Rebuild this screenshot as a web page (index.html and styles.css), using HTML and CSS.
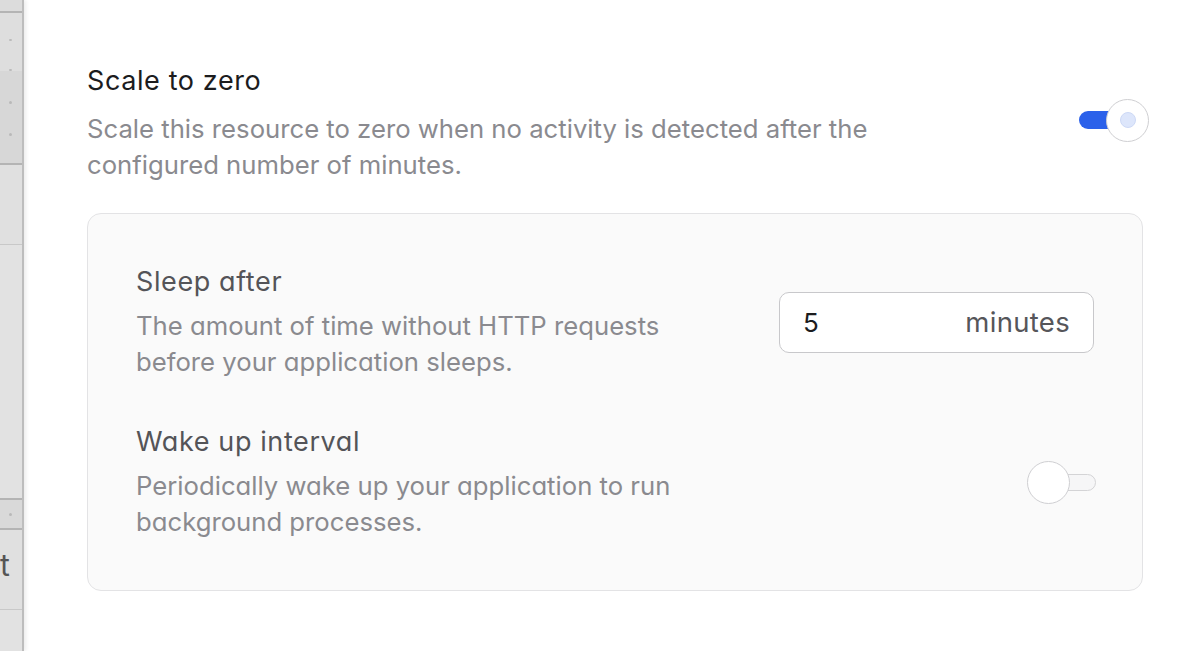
FILE: index.html
```html
<!DOCTYPE html>
<html lang="en">
<head>
<meta charset="utf-8">
<title>Scale to zero</title>
<link rel="stylesheet" href="styles.css">
</head>
<body>
<div class="layout">
  <aside class="backdrop">
    <div class="bd-block bd-top"></div>
    <div class="bd-block bd-rows">
      <span class="dot"></span>
      <span class="dot"></span>
    </div>
    <div class="bd-block bd-dark">
      <span class="dot"></span>
      <span class="dot"></span>
    </div>
    <div class="bd-block bd-mid"></div>
    <div class="bd-block bd-long"></div>
    <div class="bd-block bd-band"><span class="dot"></span></div>
    <div class="bd-block bd-text"><span class="bd-letter">t</span></div>
    <div class="bd-block bd-end"></div>
  </aside>

  <main class="panel">
    <section class="setting-head">
      <div class="setting-text">
        <h2 class="setting-title">Scale to zero</h2>
        <p class="setting-desc head-desc">Scale this resource to zero when no activity is detected after the configured number of minutes.</p>
      </div>
      <div class="toggle toggle-on" role="switch" aria-checked="true">
        <span class="thumb"><span class="thumb-dot"></span></span>
      </div>
    </section>

    <section class="card">
      <div class="row">
        <div class="row-text">
          <h3 class="row-title">Sleep after</h3>
          <p class="row-desc">The amount of time without HTTP requests before your application sleeps.</p>
        </div>
        <label class="number-input">
          <span class="number-value">5</span>
          <span class="number-unit">minutes</span>
        </label>
      </div>
      <div class="row">
        <div class="row-text">
          <h3 class="row-title">Wake up interval</h3>
          <p class="row-desc">Periodically wake up your application to run background processes.</p>
        </div>
        <div class="toggle toggle-off" role="switch" aria-checked="false">
          <span class="thumb"></span>
        </div>
      </div>
    </section>
  </main>
</div>
</body>
</html>
```
FILE: styles.css
```css
* { box-sizing: border-box; }

html, body {
  margin: 0;
  padding: 0;
  height: 100%;
  background: #ffffff;
  font-family: "Inter", "Noto Sans", "Liberation Sans", sans-serif;
}

.layout {
  display: flex;
  height: 651px;
  overflow: hidden;
}

/* background page peeking from the left */
.backdrop {
  width: 24px;
  flex: 0 0 24px;
  display: flex;
  flex-direction: column;
  background: #dedede;
  border-right: 2px solid #bdbdbd;
  box-shadow: 2px 0 4px rgba(0,0,0,0.08);
}

.bd-block {
  border-bottom: 2px solid #b4b4b4;
  display: flex;
  flex-direction: column;
  align-items: flex-start;
  padding-left: 9px;
}

.bd-top { height: 13px; background: #dcdcdc; }
.bd-rows { height: 58px; background: #dedede; border-bottom: none; padding-top: 26px; gap: 28px; }
.bd-dark { height: 94px; background: #d7d7d7; gap: 29px; padding-top: 30px; }
.bd-mid { height: 80px; background: #e0e0e0; border-bottom-color: #c8c8c8; border-bottom-width: 1px; }
.bd-long { height: 255px; background: #e2e2e2; }
.bd-band { height: 30px; background: #d9d9d9; justify-content: center; }
.bd-text { height: 80px; background: #e0e0e0; border-bottom-color: #c8c8c8; border-bottom-width: 1px; padding-left: 0; }
.bd-end { flex: 1; background: #e2e2e2; border-bottom: none; }

.dot {
  width: 3px;
  height: 3px;
  border-radius: 50%;
  background: #b9b9b9;
}

.bd-letter {
  font-size: 30px;
  line-height: 1;
  color: #555;
  margin-top: 20px;
  margin-left: 0;
}

/* panel */
.panel {
  flex: 1;
  padding: 63px 56px 0 63px;
}

.setting-head {
  display: flex;
  align-items: center;
  justify-content: space-between;
}

.setting-title {
  margin: 0;
  font-size: 27px;
  line-height: 36px;
  font-weight: 400;
  letter-spacing: 0.6px;
  color: #1c1c1e;
}

.setting-desc {
  margin: 12px 0 0;
  font-size: 25.7px;
  line-height: 36px;
  font-weight: 400;
  color: #8a8a8f;
}

.head-desc { max-width: 830px; }

/* toggles */
.toggle {
  position: relative;
  width: 64px;
  height: 18px;
  border-radius: 9px;
  flex: 0 0 auto;
}

.toggle-on {
  background: #2b61ea;
  margin-bottom: 6px;
}

.toggle-off {
  background: #f6f6f7;
  border: 1.5px solid #d4d4d6;
  width: 63px;
  height: 17px;
  margin-right: -2px;
}

.thumb {
  position: absolute;
  top: 50%;
  width: 43px;
  height: 43px;
  margin-top: -21.5px;
  border-radius: 50%;
  background: #ffffff;
  border: 1.5px solid #cfcfd2;
  display: flex;
  align-items: center;
  justify-content: center;
}

.toggle-on .thumb { right: -6px; }
.toggle-off .thumb { left: -7px; }

.thumb-dot {
  width: 16px;
  height: 16px;
  border-radius: 50%;
  background: #dde6fb;
  border: 1px solid #cdd9f6;
}

/* card */
.card {
  margin-top: 30px;
  background: #fafafa;
  border: 1.5px solid #e3e3e5;
  border-radius: 14px;
  padding: 50px 48px 50px 48px;
  display: flex;
  flex-direction: column;
  gap: 44px;
}

.row {
  display: flex;
  align-items: center;
  justify-content: space-between;
}

.row-title {
  margin: 0;
  font-size: 27px;
  line-height: 36px;
  font-weight: 400;
  letter-spacing: 0.6px;
  color: #545458;
  font-feature-settings: "cv11";
}

.row-desc {
  margin: 8px 0 0;
  font-size: 25.7px;
  line-height: 36px;
  color: #8a8a8f;
  max-width: 570px;
  font-feature-settings: "cv11";
}

.number-input {
  width: 315px;
  height: 61px;
  border: 1.5px solid #c8c8cb;
  border-radius: 10px;
  background: #ffffff;
  display: flex;
  align-items: center;
  justify-content: space-between;
  padding: 0 23px 0 23px;
  font-size: 26px;
}

.number-value { color: #1c1c1e; }
.number-unit { color: #56565a; font-size: 27.5px; letter-spacing: 0.3px; }
```
